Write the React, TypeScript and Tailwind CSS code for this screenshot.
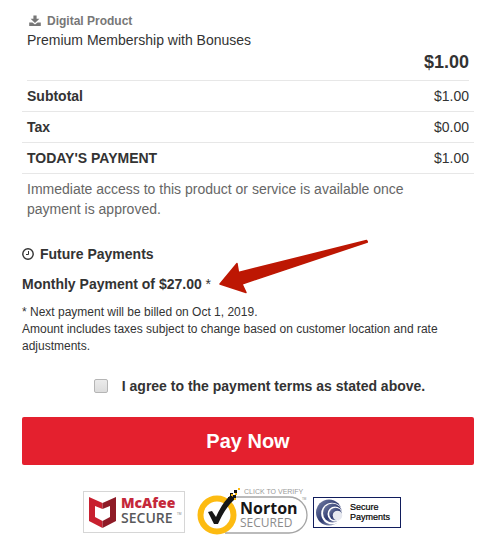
interface TotalRow {
  label: string
  amount: string
}

const totals: TotalRow[] = [
  { label: 'Subtotal', amount: '$1.00' },
  { label: 'Tax', amount: '$0.00' },
  { label: "TODAY'S PAYMENT", amount: '$1.00' }
]

function DownloadIcon() {
  return (
    <svg viewBox="0 0 12 12" className="w-3 h-3" fill="currentColor" aria-hidden="true">
      <path d="M4.4 0.4h3.2v3.400h2.800L6 8 1.600 3.800h2.800z" />
      <path d="M0.2 7.600h3.200L6 9.600l2.600-2h3.200V11H0.200z" />
    </svg>
  )
}

function ClockIcon() {
  return (
    <svg viewBox="0 0 12 12" className="w-3 h-3" fill="none" stroke="currentColor" aria-hidden="true">
      <circle cx="6" cy="6" r="5.200" strokeWidth="1.400" />
      <path d="M6.500 3v3.500H4" strokeWidth="1" />
    </svg>
  )
}

function McAfeeBadge() {
  return (
    <svg viewBox="0 0 102 42" className="w-[102px] h-[42px]" role="img" aria-label="McAfee Secure">
      <rect x="0.5" y="0.5" width="101" height="41" fill="#fff" stroke="#d6d6d6" />
      <path d="M6 6l13.500 6v6L12 15v11l7.500 4v7L6 30z" fill="#c8202f" />
      <path d="M33 6l-13.500 6v6L27 15v11l-7.500 4v7L33 30z" fill="#8e1b27" />
      <g fontFamily="'Open Sans', sans-serif">
        <text x="38" y="17" fontSize="14" fontWeight="800" fill="#c5283a">McAfee</text>
        <text x="38" y="32" fontSize="14" fontWeight="600" fill="#59595b">SECURE</text>
        <text x="94" y="24" fontSize="3" fill="#777">TM</text>
      </g>
    </svg>
  )
}

function NortonBadge() {
  return (
    <svg viewBox="0 0 112 50" className="w-[112px] h-[50px]" role="img" aria-label="Norton Secured">
      <path d="M34 10H92a18 18 0 0 1 0 36H28" fill="#fff" stroke="#a5a5a5" strokeWidth="1.300" />
      <circle cx="20" cy="28" r="16.500" fill="#fff" stroke="#fdbb11" strokeWidth="6" />
      <path d="M11 25l4-1 4 6C23 21 28 13 34 8l4 4C31 18 26 26 21 37h-4z" fill="#171717" />
      <path d="M33 6h3v3h-3zM37 3h3v3h-3zM36 8h3v3h-3zM31 10h3v3h-3z" fill="#171717" />
      <path d="M34 7h2v2h-2zM38 6h2v2h-2zM41 1h2v2h-2zM37 11h2v2h-2z" fill="#fdbb11" />
      <g fontFamily="'Liberation Sans', Arial, sans-serif">
        <text x="47" y="7" fontSize="7" fill="#999">CLICK TO VERIFY</text>
        <text x="105" y="13" fontSize="3" fill="#888">TM</text>
      </g>
      <g fontFamily="'Open Sans', sans-serif">
        <text x="43" y="27" fontSize="16" fontWeight="700" fill="#171717">Norton</text>
        <text x="43" y="40" fontSize="12" fill="#8c8c8c">SECURED</text>
      </g>
    </svg>
  )
}

function SecurePaymentsBadge() {
  return (
    <svg viewBox="0 0 88 31" className="w-[88px] h-[31px]" role="img" aria-label="Secure Payments">
      <defs>
        <linearGradient id="swirl" x1="0" y1="0" x2="1" y2="1">
          <stop offset="0" stopColor="#7d87aa" />
          <stop offset="0.5" stopColor="#2e3a70" />
          <stop offset="1" stopColor="#b9bfd3" />
        </linearGradient>
      </defs>
      <rect x="0.5" y="0.5" width="87" height="30" fill="#fff" stroke="#101c5c" />
      <circle cx="16" cy="15.500" r="13" fill="url(#swirl)" />
      <circle cx="19" cy="16.500" r="10.800" fill="#fff" />
      <circle cx="19.500" cy="16" r="9.500" fill="url(#swirl)" />
      <circle cx="22" cy="17" r="7.500" fill="#fff" />
      <circle cx="22.500" cy="17" r="6.300" fill="url(#swirl)" />
      <circle cx="24.500" cy="18.500" r="4.800" fill="#e6e8ef" />
      <g fontFamily="'Liberation Sans', Arial, sans-serif" fontSize="9" fill="#000" stroke="#000" strokeWidth="0.200">
        <text x="37" y="13">Secure</text>
        <text x="37" y="23">Payments</text>
      </g>
    </svg>
  )
}

export default function App() {
  return (
    <main className="relative bg-white pl-[22px] pr-3 pt-3 font-['Liberation_Sans',Arial,sans-serif] text-sm text-[#333]">
      <section className="mx-[5px] border-b border-[#e7e7e7] pb-[5px]">
        <div className="flex items-center gap-[6px] pl-[2px] text-xs leading-[18px] font-bold text-[#777]">
          <DownloadIcon />
          Digital Product
        </div>
        <p className="leading-5">Premium Membership with Bonuses</p>
        <p className="text-right text-lg leading-[25px] font-bold">$1.00</p>
      </section>

      <table className="w-full border-collapse">
        <tbody>
          {totals.map(row => (
            <tr key={row.label} className="border-b border-[#e7e7e7]">
              <th scope="row" className="py-[5px] pl-[5px] text-left leading-5 font-bold">{row.label}</th>
              <td className="py-[5px] pr-[5px] text-right leading-5">{row.amount}</td>
            </tr>
          ))}
        </tbody>
      </table>

      <p className="pt-[5px] pr-6 pl-[5px] leading-5 text-[#666]">
        Immediate access to this product or service is available once payment is approved.
      </p>

      <section className="mt-[25px]">
        <h2 className="flex items-center gap-[6px] leading-5 font-bold">
          <ClockIcon />
          Future Payments
        </h2>
        <p className="mt-[10px] leading-5">
          <strong>Monthly Payment of $27.00</strong> *
        </p>
        <p className="mt-[10px] pr-6 text-xs leading-[17px]">
          * Next payment will be billed on Oct 1, 2019.
          <br />
          Amount includes taxes subject to change based on customer location and rate adjustments.
        </p>
      </section>

      <label className="mt-[21px] flex items-center justify-center gap-[14px] pl-[23px] leading-5 font-bold">
        <input
          type="checkbox"
          className="h-[14px] w-[14px] appearance-none rounded-[2px] border border-[#b5b5b5] bg-linear-to-b from-[#ebebeb] to-[#dcdcdc]"
        />
        I agree to the payment terms as stated above.
      </label>

      <button type="button" className="mt-[21px] mb-[22px] block h-12 w-full rounded-[2px] bg-[#e4202e] text-xl font-bold text-white">
        Pay Now
      </button>

      <footer className="flex items-center justify-center gap-1 pr-3">
        <McAfeeBadge />
        <div className="pl-2">
          <NortonBadge />
        </div>
        <SecurePaymentsBadge />
      </footer>

      {/* Arrow pointing at the monthly payment */}
      <svg viewBox="0 0 150 56" className="pointer-events-none absolute top-[238px] left-[218px] h-[56px] w-[150px]" aria-hidden="true">
        <path
          d="M2 46L19 25.500L20.500 34.500L148.500 2.500L149.500 4L24 46L28 54.500Z"
          fill="#bd1703"
          stroke="#bd1703"
          strokeWidth="1.500"
          strokeLinejoin="round"
        />
      </svg>
    </main>
  )
}
